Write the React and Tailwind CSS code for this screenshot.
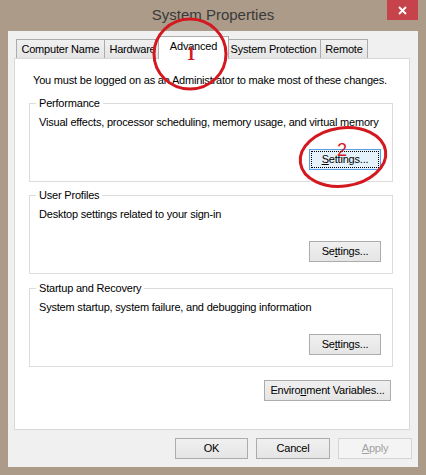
import React from "react";

const Btn = ({ children, className = "", focused = false, disabled = false }) => {
  let look = "border-[#acacac] bg-gradient-to-b from-[#f0f0f0] to-[#e5e5e5] text-black";
  if (focused) look = "border-[#569de5] bg-[#e5f1fb] text-black";
  if (disabled) look = "border-[#d5d5d5] bg-[#f4f4f4] text-[#a2a2a2]";
  return (
    <button
      className={`h-[21px] border flex items-center justify-center p-[2px] ${look} ${className}`}
    >
      <span
        className={`w-full h-full flex items-center justify-center ${
          focused ? "outline outline-1 outline-dotted outline-black" : ""
        }`}
      >
        {children}
      </span>
    </button>
  );
};

const Tab = ({ label, className = "", selected = false }) => (
  <div
    className={`flex items-center justify-center border border-b-0 border-[#acacac] ${
      selected
        ? "h-[23px] bg-white relative z-10 mb-[-1px] pb-[3px]"
        : "h-[19px] bg-gradient-to-b from-[#f0f0f0] to-[#e5e5e5]"
    } ${className}`}
  >
    {label}
  </div>
);

const Group = ({ title, desc, button, className = "" }) => (
  <div
    className={`h-[79px] ml-[14px] w-[364px] border border-[#dcdcdc] flex flex-col ${className}`}
  >
    <span className="self-start mt-[-8px] ml-[6px] px-[3px] bg-white leading-[14px]">
      {title}
    </span>
    <span className="mt-[5px] ml-[9px] leading-[14px] whitespace-nowrap">{desc}</span>
    <div className="mt-auto mb-[11px] mr-[11px] flex justify-end">{button}</div>
  </div>
);

export default function App() {
  return (
    <div className="w-[426px] h-[475px] bg-[#ab9b88] flex flex-col relative overflow-hidden font-['Liberation_Sans',Arial,sans-serif] text-[11px] tracking-[-0.2px] text-black">
      {/* title bar */}
      <div className="h-[31px] relative flex items-center justify-center">
        <span className="text-[15px] tracking-normal text-[#3a3a3a] leading-none pb-[3px]">
          System Properties
        </span>
        <div className="absolute top-0 right-[8px] w-[31px] h-[20px] bg-[#c7434b] flex items-center justify-center">
          <svg width="9" height="9" viewBox="0 0 9 9">
            <path d="M1 1L8 8M8 1L1 8" stroke="white" strokeWidth="1.8" />
          </svg>
        </div>
      </div>

      {/* dialog body */}
      <div className="mx-[8px] h-[436px] bg-[#f0f0f0] flex flex-col pt-[5px]">
        <div className="flex items-end h-[22px] ml-[8px]">
          <Tab label="Computer Name" className="w-[89px]" />
          <Tab label="Hardware" className="w-[57px] -ml-[1px]" />
          <Tab label="Advanced" selected className="w-[71px] -ml-[3px]" />
          <Tab label="System Protection" className="w-[95px] -ml-[3px]" />
          <Tab label="Remote" className="w-[48px] -ml-[1px]" />
        </div>

        <div className="ml-[6px] mr-[8px] h-[372px] bg-white border border-[#d9d9d9] flex flex-col">
          <p className="mt-[14px] ml-[18px] leading-[14px] whitespace-nowrap">
            You must be logged on as an Administrator to make most of these changes.
          </p>
          <Group
            className="mt-[16px]"
            title="Performance"
            desc="Visual effects, processor scheduling, memory usage, and virtual memory"
            button={
              <Btn focused className="w-[72px]">
                <span><u>S</u>ettings...</span>
              </Btn>
            }
          />
          <Group
            className="mt-[13px]"
            title="User Profiles"
            desc="Desktop settings related to your sign-in"
            button={
              <Btn className="w-[72px]">
                <span>Se<u>t</u>tings...</span>
              </Btn>
            }
          />
          <Group
            className="mt-[14px]"
            title="Startup and Recovery"
            desc="System startup, system failure, and debugging information"
            button={
              <Btn className="w-[72px]">
                <span>Se<u>t</u>tings...</span>
              </Btn>
            }
          />
          <div className="mt-[13px] mr-[18px] flex justify-end">
            <Btn className="w-[127px]">
              <span>Enviro<u>n</u>ment Variables...</span>
            </Btn>
          </div>
        </div>

        <div className="mt-[8px] flex justify-end gap-[8px] pr-[6px]">
          <Btn className="w-[73px]">OK</Btn>
          <Btn className="w-[74px]">Cancel</Btn>
          <Btn disabled className="w-[74px]">
            <span><u>A</u>pply</span>
          </Btn>
        </div>
      </div>

      {/* red annotation marks */}
      <svg
        className="absolute inset-0 z-20 pointer-events-none"
        width="426"
        height="475"
        viewBox="0 0 426 475"
      >
        <ellipse cx="190" cy="54" rx="36" ry="35" fill="none" stroke="#d3181f" strokeWidth="3" />
        <text
          x="191"
          y="60"
          textAnchor="middle"
          fill="#d3181f"
          style={{ fontSize: "18px", fontWeight: 700, fontFamily: "'Liberation Serif', serif", letterSpacing: 0 }}
        >
          1
        </text>
        <ellipse
          cx="343"
          cy="157"
          rx="43"
          ry="29"
          fill="none"
          stroke="#d3181f"
          strokeWidth="3"
          transform="rotate(-8 343 157)"
        />
        <text
          x="342"
          y="156"
          textAnchor="middle"
          fill="#d3181f"
          style={{ fontSize: "18px", fontFamily: "'Liberation Sans', sans-serif", letterSpacing: 0 }}
        >
          2
        </text>
      </svg>
    </div>
  );
}
